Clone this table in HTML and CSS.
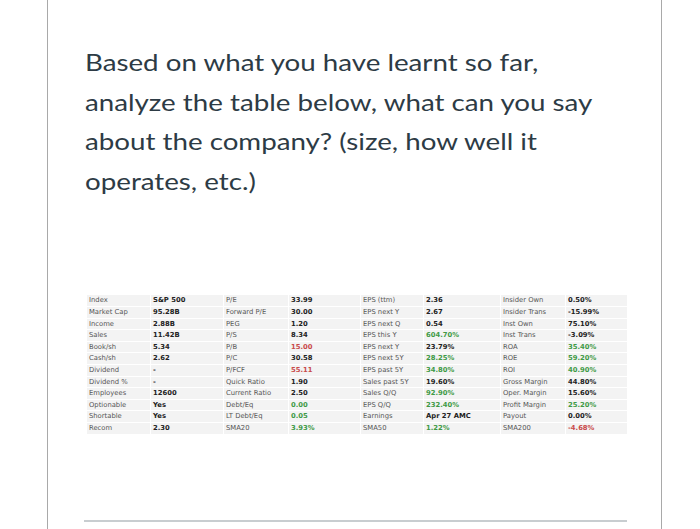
FILE: index.html
```html
<!DOCTYPE html>
<html>
<head>
<meta charset="utf-8">
<link rel="stylesheet" href="styles.css">
</head>
<body>
<div class="card">
  <p class="question">Based on what you have learnt so far, analyze the table below, what can you say about the company? (size, how well it operates, etc.)</p>
  <table class="snap">
    <colgroup>
      <col class="c1"><col class="c2"><col class="c3"><col class="c4"><col class="c5"><col class="c6"><col class="c7"><col class="c8">
    </colgroup>
    <tr><td>Index</td><td class="v">S&amp;P 500</td><td>P/E</td><td class="v">33.99</td><td>EPS (ttm)</td><td class="v">2.36</td><td>Insider Own</td><td class="v">0.50%</td></tr>
    <tr><td>Market Cap</td><td class="v">95.28B</td><td>Forward P/E</td><td class="v">30.00</td><td>EPS next Y</td><td class="v">2.67</td><td>Insider Trans</td><td class="v">-15.99%</td></tr>
    <tr><td>Income</td><td class="v">2.88B</td><td>PEG</td><td class="v">1.20</td><td>EPS next Q</td><td class="v">0.54</td><td>Inst Own</td><td class="v">75.10%</td></tr>
    <tr><td>Sales</td><td class="v">11.42B</td><td>P/S</td><td class="v">8.34</td><td>EPS this Y</td><td class="v g">604.70%</td><td>Inst Trans</td><td class="v">-3.09%</td></tr>
    <tr><td>Book/sh</td><td class="v">5.34</td><td>P/B</td><td class="v r">15.00</td><td>EPS next Y</td><td class="v">23.79%</td><td>ROA</td><td class="v g">35.40%</td></tr>
    <tr><td>Cash/sh</td><td class="v">2.62</td><td>P/C</td><td class="v">30.58</td><td>EPS next 5Y</td><td class="v g">28.25%</td><td>ROE</td><td class="v g">59.20%</td></tr>
    <tr><td>Dividend</td><td class="v">-</td><td>P/FCF</td><td class="v r">55.11</td><td>EPS past 5Y</td><td class="v g">34.80%</td><td>ROI</td><td class="v g">40.90%</td></tr>
    <tr><td>Dividend %</td><td class="v">-</td><td>Quick Ratio</td><td class="v">1.90</td><td>Sales past 5Y</td><td class="v">19.60%</td><td>Gross Margin</td><td class="v">44.80%</td></tr>
    <tr><td>Employees</td><td class="v">12600</td><td>Current Ratio</td><td class="v">2.50</td><td>Sales Q/Q</td><td class="v g">92.90%</td><td>Oper. Margin</td><td class="v">15.60%</td></tr>
    <tr><td>Optionable</td><td class="v">Yes</td><td>Debt/Eq</td><td class="v g">0.00</td><td>EPS Q/Q</td><td class="v g">232.40%</td><td>Profit Margin</td><td class="v g">25.20%</td></tr>
    <tr><td>Shortable</td><td class="v">Yes</td><td>LT Debt/Eq</td><td class="v g">0.05</td><td>Earnings</td><td class="v">Apr 27 AMC</td><td>Payout</td><td class="v">0.00%</td></tr>
    <tr><td>Recom</td><td class="v">2.30</td><td>SMA20</td><td class="v g">3.93%</td><td>SMA50</td><td class="v g">1.22%</td><td>SMA200</td><td class="v r">-4.68%</td></tr>
  </table>
  <hr class="rule">
</div>
</body>
</html>
```
FILE: styles.css
```css
html, body {
  margin: 0;
  padding: 0;
  background: #ffffff;
}
.card {
  margin-left: 47px;
  width: 615px;
  height: 529px;
  border-left: 1px solid #a9a9a9;
  border-right: 1px solid #a9a9a9;
  padding: 42px 0 0 0;
  box-sizing: border-box;
  overflow: hidden;
}
.question {
  margin: 0 0 0 37px;
  width: 456px;
  font-family: Lato, "Open Sans", sans-serif;
  font-size: 24px;
  line-height: 39.6px;
  color: #2d3b45;
  transform: scaleX(1.155);
  transform-origin: left top;
}
.snap {
  margin: 94px 0 0 38px;
  width: 541px;
  table-layout: fixed;
  border-collapse: separate;
  border-spacing: 1px;
  background: #ffffff;
  font-family: "DejaVu Sans", Verdana, sans-serif;
  font-size: 6.8px;
  color: #555555;
}
.c1 { width: 63px; }
.c2 { width: 72px; }
.c3 { width: 64px; }
.c4 { width: 71px; }
.c5 { width: 62px; }
.c6 { width: 76px; }
.c7 { width: 64px; }
.c8 { width: 61px; }
.snap td {
  background: #f3f3f3;
  height: 10.6px;
  padding: 0 0 0 2px;
  line-height: 10.6px;
  white-space: nowrap;
  overflow: hidden;
}
.snap td.v {
  font-weight: bold;
  color: #222222;
}
.snap td.g { color: #3f9a46; }
.snap td.r { color: #c94a4a; }
.rule {
  margin: 85px 0 0 36px;
  width: 543px;
  height: 0;
  border: 0;
  border-top: 2px solid #c8cdd0;
}
```
